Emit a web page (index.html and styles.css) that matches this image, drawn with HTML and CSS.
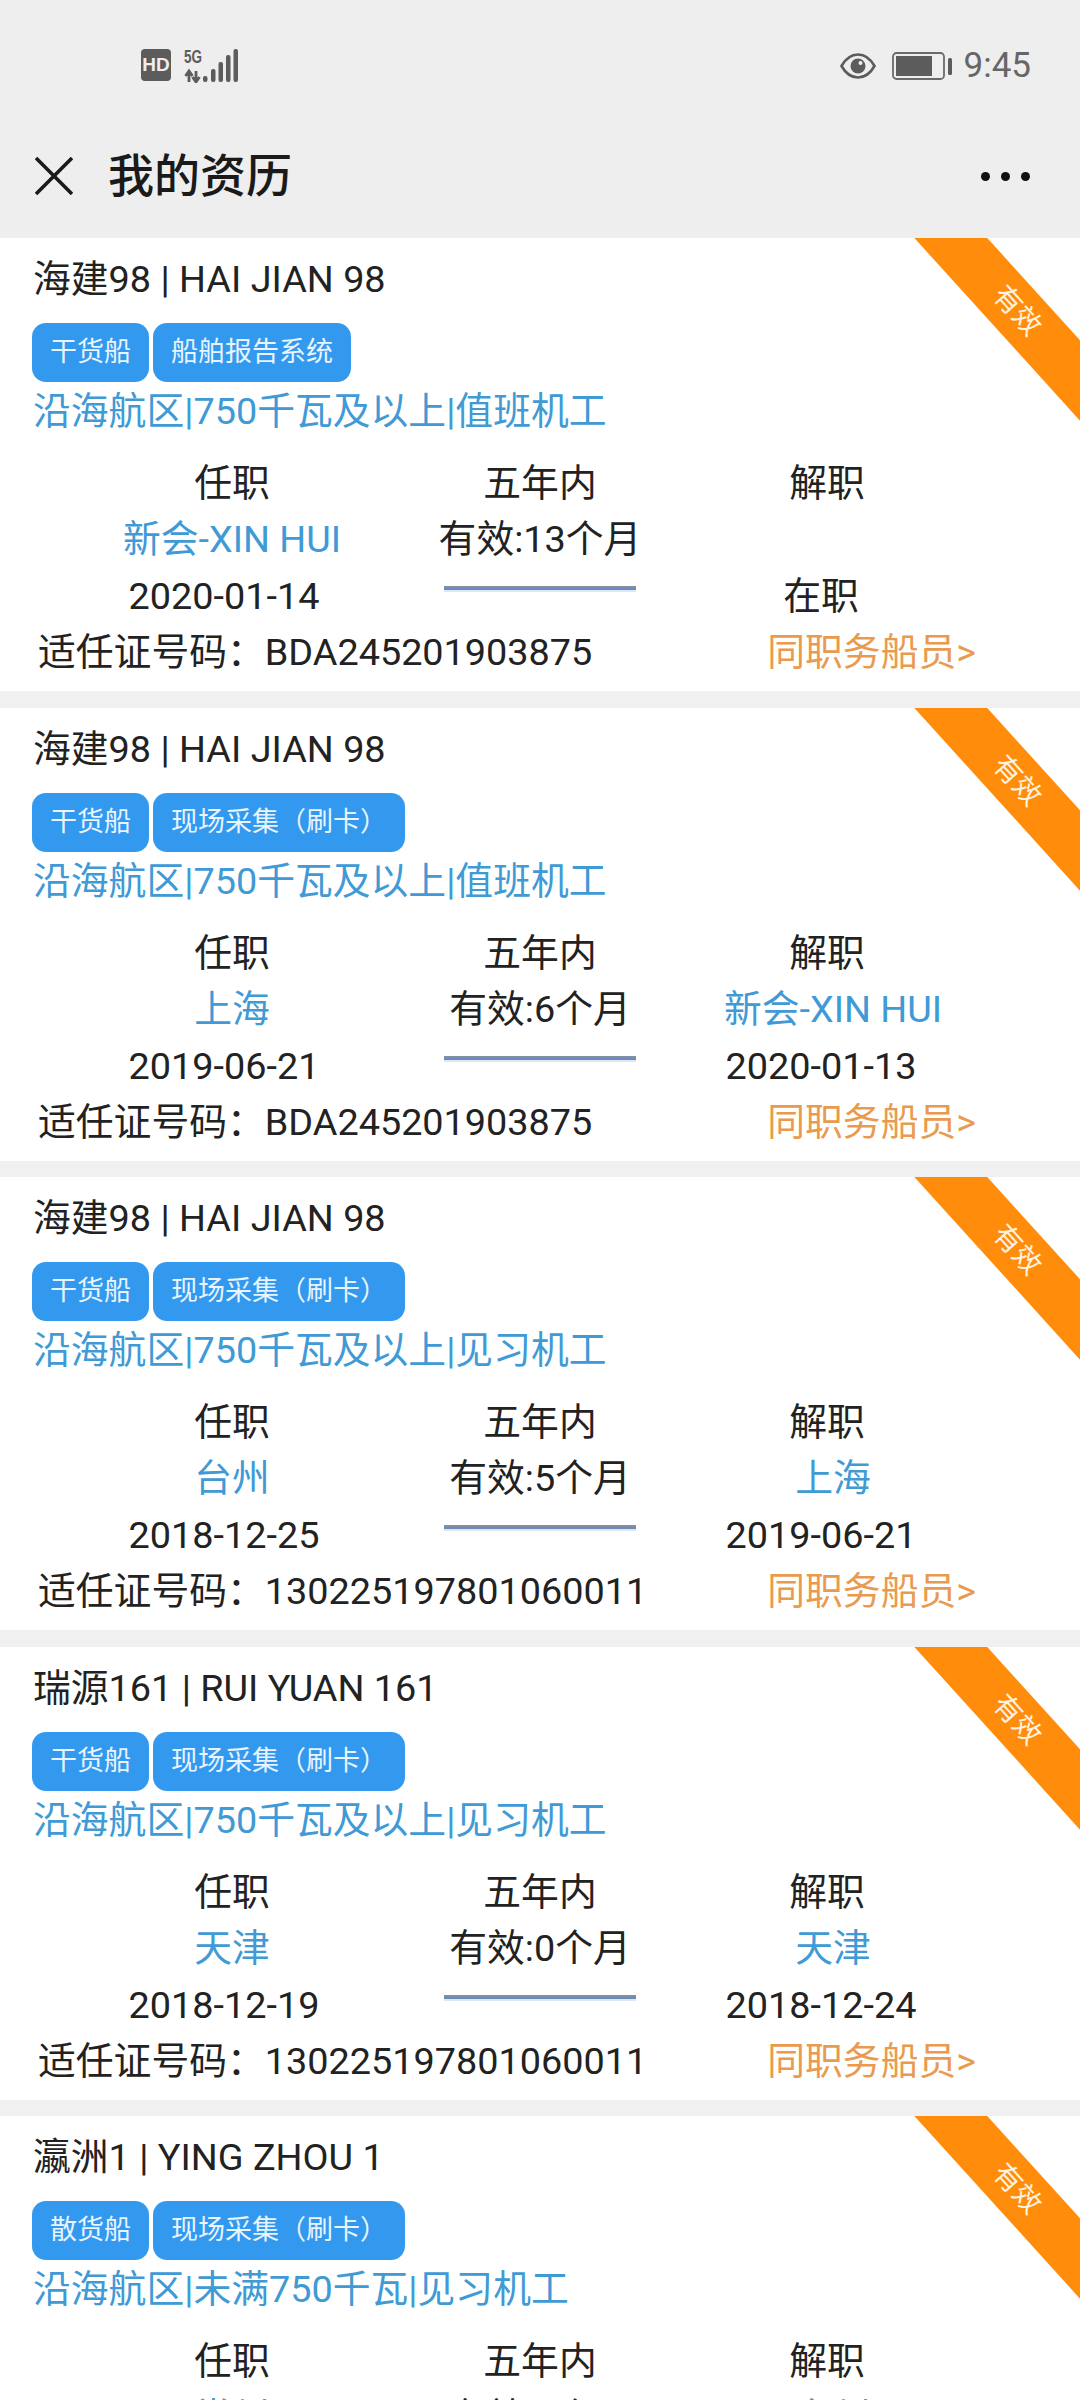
FILE: index.html
```html
<!DOCTYPE html>
<html lang="zh-CN">
<head>
<meta charset="utf-8">
<title>我的资历</title>
<link rel="stylesheet" href="styles.css">
</head>
<body>
<header class="top">
  <div class="status">
    <div class="status-left">
      <span class="hd">HD</span>
      <svg class="signal" width="56" height="40" viewBox="0 -6 56 40">
        <text x="0" y="14" class="net" textLength="18" lengthAdjust="spacingAndGlyphs">5G</text>
        <path d="M5 22v11M1.500 27l3.500-5 3.500 5M12 22v11M8.500 28l3.500 5 3.500-5" fill="none" stroke="#5c5c5c" stroke-width="2.800"/>
        <rect x="19" y="27" width="4.500" height="6" rx="2" fill="#5c5c5c"/>
        <rect x="27" y="20" width="4.500" height="13" rx="2" fill="#5c5c5c"/>
        <rect x="34.500" y="13" width="4.500" height="20" rx="2" fill="#5c5c5c"/>
        <rect x="42" y="6" width="4.500" height="27" rx="2" fill="#5c5c5c"/>
        <rect x="49.500" y="0" width="4.500" height="33" rx="2" fill="#5c5c5c"/>
      </svg>
    </div>
    <div class="status-right">
      <svg class="eye" width="36" height="26" viewBox="0 0 36 26">
        <path d="M1.500 13C6 5 11.500 1.500 18 1.500S30 5 34.500 13C30 21 24.500 24.500 18 24.500S6 21 1.500 13Z" fill="none" stroke="#5c5c5c" stroke-width="2.600"/>
        <circle cx="18" cy="13" r="7.500" fill="#5c5c5c"/>
        <circle cx="20.500" cy="10" r="2" fill="#eee"/>
      </svg>
      <svg class="battery" width="60" height="28" viewBox="0 0 60 28">
        <rect x="1" y="1" width="51" height="26" rx="3.500" fill="none" stroke="#6a6a6a" stroke-width="1.800"/>
        <rect x="4" y="4" width="36" height="20" fill="#5c5c5c"/>
        <rect x="56" y="6" width="4" height="17" rx="1.500" fill="#5c5c5c"/>
      </svg>
      <span class="time">9:45</span>
    </div>
  </div>
  <div class="nav">
    <svg class="close" width="38" height="38" viewBox="0 0 38 38">
      <path d="M1 1L37 37M37 1L1 37" stroke="#1a1a1a" stroke-width="3.600" fill="none"/>
    </svg>
    <h1 class="nav-title">我的资历</h1>
    <div class="more"><i></i><i></i><i></i></div>
  </div>
</header>

<main class="list">
  <article class="card">
    <div class="ribbon">有效</div>
    <div class="ship">海建98 | HAI JIAN 98</div>
    <div class="tags"><span class="tag">干货船</span><span class="tag">船舶报告系统</span></div>
    <div class="rank">沿海航区|750千瓦及以上|值班机工</div>
    <div class="row labels"><span>任职</span><span>五年内</span><span>解职</span></div>
    <div class="row places"><span class="place">新会-XIN HUI</span><span>有效:13个月</span><span></span></div>
    <div class="row dates"><span>2020-01-14</span><span class="bar"></span><span>在职</span></div>
    <div class="cert"><span>适任证号码：BDA245201903875</span><span class="peers">同职务船员&gt;</span></div>
  </article>

  <article class="card">
    <div class="ribbon">有效</div>
    <div class="ship">海建98 | HAI JIAN 98</div>
    <div class="tags"><span class="tag">干货船</span><span class="tag">现场采集（刷卡）</span></div>
    <div class="rank">沿海航区|750千瓦及以上|值班机工</div>
    <div class="row labels"><span>任职</span><span>五年内</span><span>解职</span></div>
    <div class="row places"><span class="place">上海</span><span>有效:6个月</span><span class="place">新会-XIN HUI</span></div>
    <div class="row dates"><span>2019-06-21</span><span class="bar"></span><span>2020-01-13</span></div>
    <div class="cert"><span>适任证号码：BDA245201903875</span><span class="peers">同职务船员&gt;</span></div>
  </article>

  <article class="card">
    <div class="ribbon">有效</div>
    <div class="ship">海建98 | HAI JIAN 98</div>
    <div class="tags"><span class="tag">干货船</span><span class="tag">现场采集（刷卡）</span></div>
    <div class="rank">沿海航区|750千瓦及以上|见习机工</div>
    <div class="row labels"><span>任职</span><span>五年内</span><span>解职</span></div>
    <div class="row places"><span class="place">台州</span><span>有效:5个月</span><span class="place">上海</span></div>
    <div class="row dates"><span>2018-12-25</span><span class="bar"></span><span>2019-06-21</span></div>
    <div class="cert"><span>适任证号码：130225197801060011</span><span class="peers">同职务船员&gt;</span></div>
  </article>

  <article class="card">
    <div class="ribbon">有效</div>
    <div class="ship">瑞源161 | RUI YUAN 161</div>
    <div class="tags"><span class="tag">干货船</span><span class="tag">现场采集（刷卡）</span></div>
    <div class="rank">沿海航区|750千瓦及以上|见习机工</div>
    <div class="row labels"><span>任职</span><span>五年内</span><span>解职</span></div>
    <div class="row places"><span class="place">天津</span><span>有效:0个月</span><span class="place">天津</span></div>
    <div class="row dates"><span>2018-12-19</span><span class="bar"></span><span>2018-12-24</span></div>
    <div class="cert"><span>适任证号码：130225197801060011</span><span class="peers">同职务船员&gt;</span></div>
  </article>

  <article class="card">
    <div class="ribbon">有效</div>
    <div class="ship">瀛洲1 | YING ZHOU 1</div>
    <div class="tags"><span class="tag">散货船</span><span class="tag">现场采集（刷卡）</span></div>
    <div class="rank">沿海航区|未满750千瓦|见习机工</div>
    <div class="row labels"><span>任职</span><span>五年内</span><span>解职</span></div>
    <div class="row places"><span class="place">常州</span><span>有效:3个月</span><span class="place">台州</span></div>
  </article>
</main>
</body>
</html>
```

FILE: styles.css
```css
* { box-sizing: border-box; }

html, body {
  margin: 0;
  height: 2400px;
  overflow: hidden;
}

body {
  background: #f0f0f0;
  color: #222;
  font-family: Roboto, "Noto Sans CJK SC", sans-serif;
  font-size: 37.8px;
}

.top {
  height: 238px;
  background: #eeeeee;
}

.status {
  height: 132px;
  padding: 0 49px 0 141px;
  display: flex;
  justify-content: space-between;
  align-items: center;
}

.status-left {
  display: flex;
  align-items: flex-start;
  gap: 13px;
  height: 34px;
}

.hd {
  width: 30px;
  height: 32px;
  border-radius: 4px;
  background: #5c5c5c;
  color: #eee;
  font-family: "Liberation Sans", sans-serif;
  font-size: 19px;
  font-weight: 700;
  line-height: 32px;
  text-align: center;
}

.net {
  font-family: "Liberation Sans", sans-serif;
  font-size: 19px;
  font-weight: 700;
  fill: #5c5c5c;
}

.signal, .eye, .battery, .close { display: block; flex: none; }

.signal { margin-top: -6px; }

.status-right {
  display: flex;
  align-items: center;
}

.battery { margin-left: 16px; }

.time {
  margin-left: 12px;
  font-size: 35px;
  line-height: 40px;
  color: #666;
}

.nav {
  height: 88px;
  padding: 0 50px 0 35px;
  display: flex;
  align-items: center;
}

.nav-title {
  margin: 0 0 0 35px;
  font-size: 46px;
  font-weight: 500;
  color: #1a1a1a;
  line-height: 60px;
}

.more {
  margin-left: auto;
  display: flex;
  gap: 11px;
}

.more i {
  display: block;
  width: 9px;
  height: 9px;
  border-radius: 50%;
  background: #111;
}

.card {
  position: relative;
  height: 453px;
  margin-bottom: 16.5px;
  padding: 0 33px;
  background: #fff;
  overflow: hidden;
}

.ribbon {
  position: absolute;
  left: 867px;
  top: 46px;
  width: 300px;
  height: 54px;
  background: #ff8c0a;
  color: #fff3e0;
  font-size: 28px;
  line-height: 54px;
  text-align: center;
  transform: rotate(47.8deg);
}

.ship {
  height: 80px;
  line-height: 82px;
  white-space: nowrap;
}

.tags {
  margin: 5px 0 0 -1px;
  display: flex;
  gap: 4px;
}

.tag {
  height: 59px;
  padding: 0 18px;
  border-radius: 14px;
  background: #3399ee;
  color: #e8f4ff;
  font-size: 27px;
  line-height: 59px;
  white-space: nowrap;
}

.rank {
  height: 56px;
  line-height: 59px;
  color: #3f9ad6;
  white-space: nowrap;
}

.row {
  display: grid;
  height: 57px;
  line-height: 57px;
  margin-left: -33px;
  text-align: center;
  white-space: nowrap;
}

.labels {
  margin-top: 16px;
  line-height: 59px;
  padding-left: 78px;
  grid-template-columns: 308px 308px 266px;
}

.places {
  padding-left: 78px;
  grid-template-columns: 308px 308px 278px;
}

.dates {
  padding-left: 68px;
  grid-template-columns: 312px 320px 242px;
}

.place { color: #3f9ad6; }

.bar {
  justify-self: center;
  width: 192px;
  height: 6px;
  margin-top: 18px;
  background: linear-gradient(#868e9c 0 2px, #668cc2 2px 4px, #dfe6f3 4px);
}

.cert {
  display: flex;
  justify-content: space-between;
  padding: 0 71px 0 5px;
  height: 57px;
  line-height: 54px;
  white-space: nowrap;
}

.peers { color: #ea9a4f; }
```
